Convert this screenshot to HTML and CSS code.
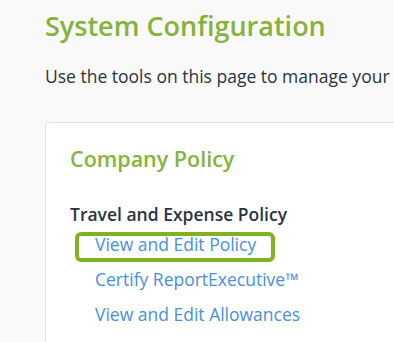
FILE: index.html
```html
<!DOCTYPE html>
<html>
<head>
<meta charset="utf-8">
<link rel="stylesheet" href="styles.css">
</head>
<body>
<div class="page">
  <h1 class="title">System Configuration</h1>
  <p class="intro">Use the tools on this page to manage your</p>
  <div class="card">
    <h2 class="card-title">Company Policy</h2>
    <h3 class="section">Travel and Expense Policy</h3>
    <ul class="links">
      <li class="link-item highlighted"><a href="#">View and Edit Policy</a></li>
      <li class="link-item"><a href="#">Certify ReportExecutive™</a></li>
      <li class="link-item"><a href="#">View and Edit Allowances</a></li>
    </ul>
  </div>
</div>
</body>
</html>
```
FILE: styles.css
```css
html, body {
  margin: 0;
  padding: 0;
  background: #f9f9f9;
  font-family: "Open Sans", "Noto Sans", sans-serif;
  overflow: hidden;
  height: 342px;
}
.page {
  padding: 8px 0 0 45px;
  width: 560px;
}
.title {
  margin: 0;
  font-size: 27px;
  font-weight: 600;
  color: #87b23c;
  line-height: 36px;
}
.intro {
  margin: 20px 0 0;
  font-size: 17.5px;
  color: #2b3440;
  line-height: 24px;
  white-space: nowrap;
}
.card {
  margin-top: 34px;
  background: #fff;
  border: 1px solid #e2e2e2;
  border-radius: 4px;
  padding: 21px 24px 40px;
}
.card-title {
  margin: 0;
  font-size: 21.5px;
  font-weight: 600;
  color: #87b23c;
  line-height: 30px;
}
.section {
  margin: 28px 0 0;
  font-size: 17.5px;
  font-weight: 600;
  color: #2b3440;
  line-height: 24px;
}
.links {
  list-style: none;
  margin: 6px 0 0;
  padding: 0;
}
.link-item {
  padding-left: 25px;
  height: 35px;
  line-height: 24px;
}
.link-item a {
  font-size: 17.5px;
  color: #4a8fe0;
  text-decoration: none;
}
.highlighted {
  position: relative;
}
.highlighted::after {
  content: "";
  position: absolute;
  left: 5px;
  top: 0;
  width: 200px;
  height: 30px;
  box-sizing: border-box;
  border: 4px solid #80b41f;
  border-radius: 6px;
}
```
